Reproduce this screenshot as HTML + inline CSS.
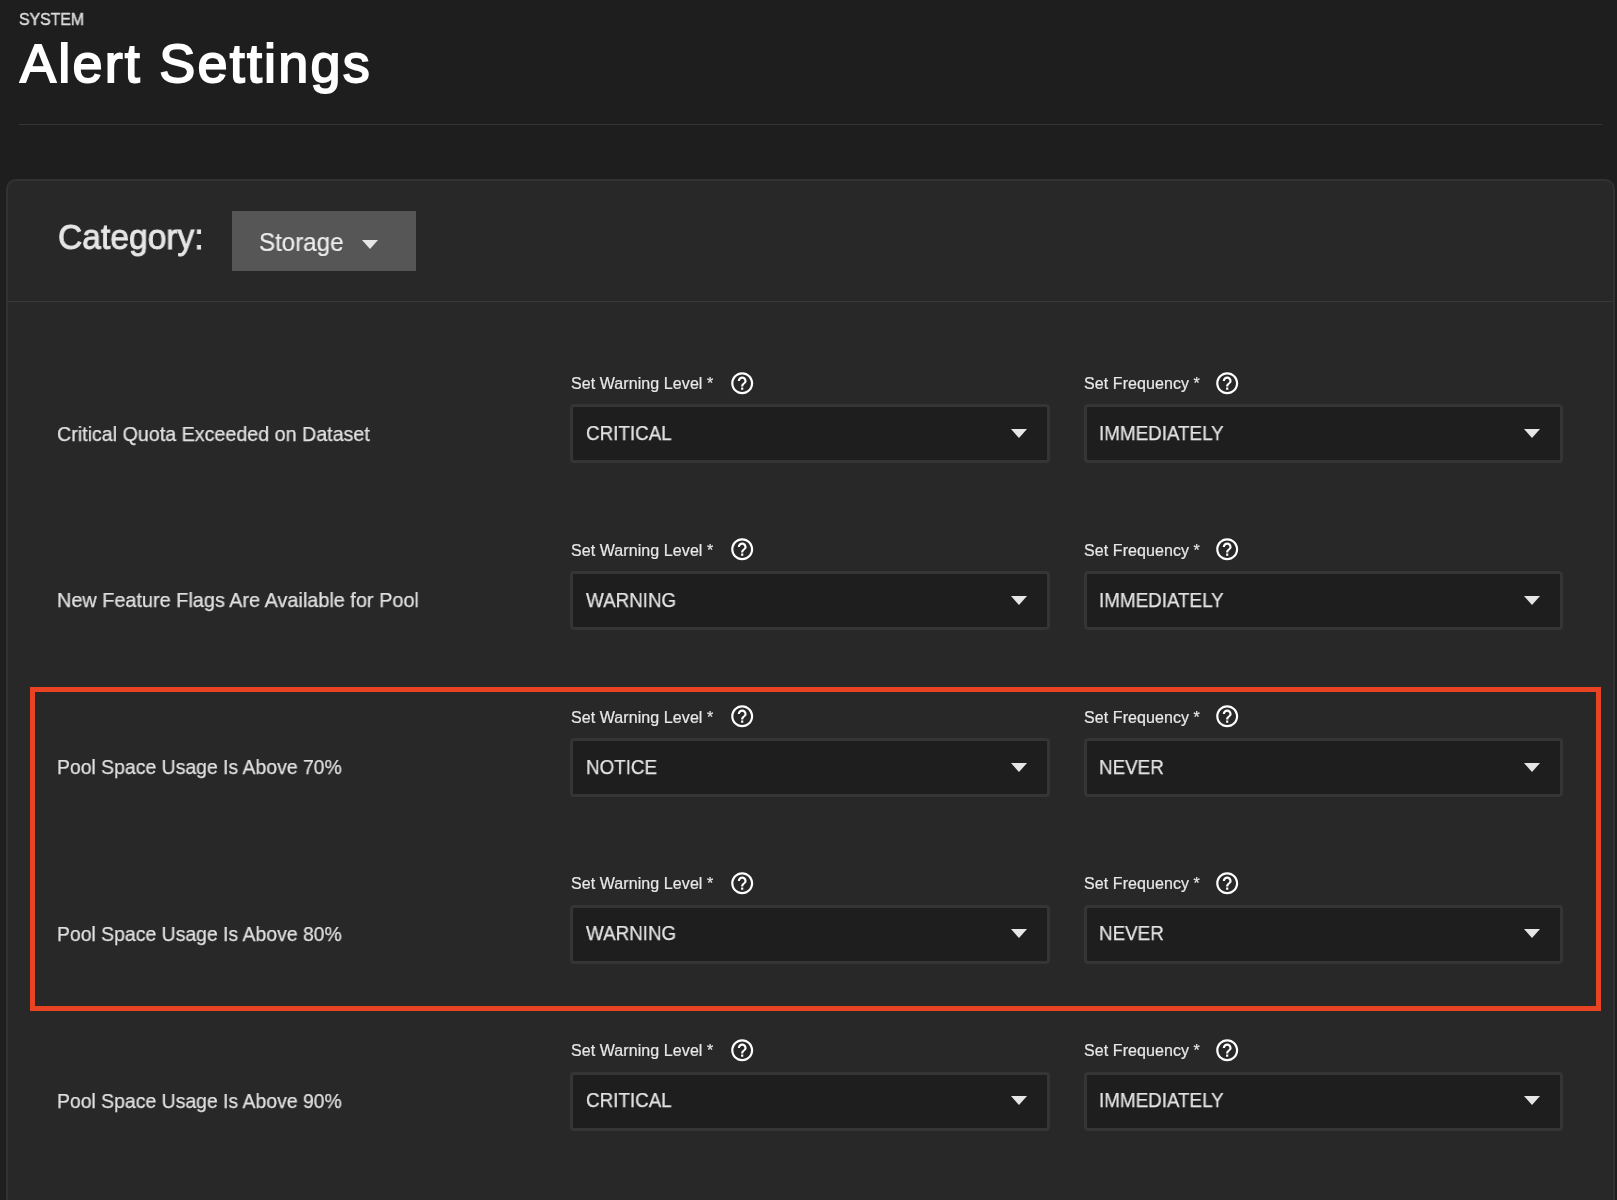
<!DOCTYPE html>
<html><head><meta charset="utf-8"><style>
html,body{margin:0;padding:0;}
body{width:1617px;height:1200px;overflow:hidden;background:#1e1e1e;position:relative;font-family:"Liberation Sans",sans-serif;color:#e3e3e3;-webkit-font-smoothing:antialiased;}
.abs{position:absolute;}
#sys,#title,#cat,#catbtn .t,.rlab,.flab,.sel .val{will-change:transform;}
#sys{position:absolute;left:19px;top:9.5px;font-size:16.5px;font-weight:normal;-webkit-text-stroke:0.5px #dcdcdc;color:#dcdcdc;line-height:19px;transform:scaleX(0.96);transform-origin:0 0;}
#title{position:absolute;left:20px;top:33px;font-size:54px;font-weight:normal;-webkit-text-stroke:1.8px #fff;color:#fff;line-height:60px;letter-spacing:2.2px;}
#rule{position:absolute;left:19px;top:124px;width:1583px;height:1px;background:#353535;}
#card{position:absolute;left:6px;top:179px;width:1605px;height:1100px;background:#282828;border:2px solid #323232;border-radius:10px;}
#sep{position:absolute;left:8px;top:301px;width:1605px;height:1px;background:#383838;}
#cat{position:absolute;left:58px;top:217.5px;font-size:35px;font-weight:normal;-webkit-text-stroke:0.9px #e6e6e6;color:#e6e6e6;line-height:37px;transform:scaleX(0.96);transform-origin:0 0;}
#catbtn{position:absolute;left:232px;top:211px;width:184px;height:60px;background:#565656;}
#catbtn .t{position:absolute;left:27px;top:16.5px;font-size:25px;color:#ececec;line-height:28px;-webkit-text-stroke:0.2px #ececec;transform:scaleX(0.965);transform-origin:0 0;}
#catbtn .a{position:absolute;left:130px;top:29px;line-height:0;}
.rlab{position:absolute;left:57px;font-size:21px;line-height:24px;color:#e0e0e0;-webkit-text-stroke:0.25px #e0e0e0;transform:scaleX(0.937);transform-origin:0 0;white-space:nowrap;}
.flab{position:absolute;font-size:16px;line-height:19px;color:#e8e8e8;-webkit-text-stroke:0.2px #e8e8e8;letter-spacing:0.08px;}
.help{position:absolute;width:26.4px;height:26.4px;line-height:0;}
.sel{position:absolute;height:53px;border:3px solid #353535;border-radius:4px;background:#1e1e1e;}
.sel .val{position:absolute;top:14.7px;font-size:20px;line-height:22px;color:#e3e3e3;-webkit-text-stroke:0.25px #e3e3e3;transform:scaleX(0.94);transform-origin:0 0;}
.sel .arr{position:absolute;top:21.7px;line-height:0;}
#red{position:absolute;left:30px;top:687px;width:1561px;height:314px;border:5px solid #e84424;}
</style></head><body>
<div id="sys">SYSTEM</div>
<div id="title">Alert Settings</div>
<div id="rule"></div>
<div id="card"></div>
<div id="sep"></div>
<div id="cat">Category:</div>
<div id="catbtn"><span class="t">Storage</span><span class="a"><svg width="16" height="9" viewBox="0 0 16 9"><path d="M0 0H16L8 9Z" fill="#e6e6e6"/></svg></span></div>
<div class="rlab" style="top:421.50px;transform:scaleX(0.937)">Critical Quota Exceeded on Dataset</div><div class="flab" style="left:571.4px;top:373.70px">Set Warning Level *</div><div class="help" style="left:728.8px;top:369.55px"><svg width="26.4" height="26.4" viewBox="0 0 24 24"><path fill="#fff" d="M11 18h2v-2h-2v2zm1-16C6.48 2 2 6.48 2 12s4.48 10 10 10 10-4.48 10-10S17.52 2 12 2zm0 18c-4.41 0-8-3.59-8-8s3.59-8 8-8 8 3.59 8 8-3.59 8-8 8zm0-14c-2.21 0-4 1.79-4 4h2c0-1.1.9-2 2-2s2 .9 2 2c0 2-3 1.75-3 5h2c0-2.25 3-2.5 3-5 0-2.21-1.79-4-4-4z"/></svg></div><div class="sel" style="left:570px;width:474px;top:404.10px"><span class="val" style="left:13px">CRITICAL</span><span class="arr" style="left:438px"><svg width="16" height="9" viewBox="0 0 16 9"><path d="M0 0H16L8 9Z" fill="#e6e6e6"/></svg></span></div><div class="flab" style="left:1084.4px;top:373.70px">Set Frequency *</div><div class="help" style="left:1214.3px;top:369.55px"><svg width="26.4" height="26.4" viewBox="0 0 24 24"><path fill="#fff" d="M11 18h2v-2h-2v2zm1-16C6.48 2 2 6.48 2 12s4.48 10 10 10 10-4.48 10-10S17.52 2 12 2zm0 18c-4.41 0-8-3.59-8-8s3.59-8 8-8 8 3.59 8 8-3.59 8-8 8zm0-14c-2.21 0-4 1.79-4 4h2c0-1.1.9-2 2-2s2 .9 2 2c0 2-3 1.75-3 5h2c0-2.25 3-2.5 3-5 0-2.21-1.79-4-4-4z"/></svg></div><div class="sel" style="left:1084px;width:473px;top:404.10px"><span class="val" style="left:12px">IMMEDIATELY</span><span class="arr" style="left:436.8px"><svg width="16" height="9" viewBox="0 0 16 9"><path d="M0 0H16L8 9Z" fill="#e6e6e6"/></svg></span></div><div class="rlab" style="top:588.40px;transform:scaleX(0.946)">New Feature Flags Are Available for Pool</div><div class="flab" style="left:571.4px;top:540.60px">Set Warning Level *</div><div class="help" style="left:728.8px;top:536.45px"><svg width="26.4" height="26.4" viewBox="0 0 24 24"><path fill="#fff" d="M11 18h2v-2h-2v2zm1-16C6.48 2 2 6.48 2 12s4.48 10 10 10 10-4.48 10-10S17.52 2 12 2zm0 18c-4.41 0-8-3.59-8-8s3.59-8 8-8 8 3.59 8 8-3.59 8-8 8zm0-14c-2.21 0-4 1.79-4 4h2c0-1.1.9-2 2-2s2 .9 2 2c0 2-3 1.75-3 5h2c0-2.25 3-2.5 3-5 0-2.21-1.79-4-4-4z"/></svg></div><div class="sel" style="left:570px;width:474px;top:571.00px"><span class="val" style="left:13px">WARNING</span><span class="arr" style="left:438px"><svg width="16" height="9" viewBox="0 0 16 9"><path d="M0 0H16L8 9Z" fill="#e6e6e6"/></svg></span></div><div class="flab" style="left:1084.4px;top:540.60px">Set Frequency *</div><div class="help" style="left:1214.3px;top:536.45px"><svg width="26.4" height="26.4" viewBox="0 0 24 24"><path fill="#fff" d="M11 18h2v-2h-2v2zm1-16C6.48 2 2 6.48 2 12s4.48 10 10 10 10-4.48 10-10S17.52 2 12 2zm0 18c-4.41 0-8-3.59-8-8s3.59-8 8-8 8 3.59 8 8-3.59 8-8 8zm0-14c-2.21 0-4 1.79-4 4h2c0-1.1.9-2 2-2s2 .9 2 2c0 2-3 1.75-3 5h2c0-2.25 3-2.5 3-5 0-2.21-1.79-4-4-4z"/></svg></div><div class="sel" style="left:1084px;width:473px;top:571.00px"><span class="val" style="left:12px">IMMEDIATELY</span><span class="arr" style="left:436.8px"><svg width="16" height="9" viewBox="0 0 16 9"><path d="M0 0H16L8 9Z" fill="#e6e6e6"/></svg></span></div><div class="rlab" style="top:755.30px;transform:scaleX(0.924)">Pool Space Usage Is Above 70%</div><div class="flab" style="left:571.4px;top:707.50px">Set Warning Level *</div><div class="help" style="left:728.8px;top:703.35px"><svg width="26.4" height="26.4" viewBox="0 0 24 24"><path fill="#fff" d="M11 18h2v-2h-2v2zm1-16C6.48 2 2 6.48 2 12s4.48 10 10 10 10-4.48 10-10S17.52 2 12 2zm0 18c-4.41 0-8-3.59-8-8s3.59-8 8-8 8 3.59 8 8-3.59 8-8 8zm0-14c-2.21 0-4 1.79-4 4h2c0-1.1.9-2 2-2s2 .9 2 2c0 2-3 1.75-3 5h2c0-2.25 3-2.5 3-5 0-2.21-1.79-4-4-4z"/></svg></div><div class="sel" style="left:570px;width:474px;top:737.90px"><span class="val" style="left:13px">NOTICE</span><span class="arr" style="left:438px"><svg width="16" height="9" viewBox="0 0 16 9"><path d="M0 0H16L8 9Z" fill="#e6e6e6"/></svg></span></div><div class="flab" style="left:1084.4px;top:707.50px">Set Frequency *</div><div class="help" style="left:1214.3px;top:703.35px"><svg width="26.4" height="26.4" viewBox="0 0 24 24"><path fill="#fff" d="M11 18h2v-2h-2v2zm1-16C6.48 2 2 6.48 2 12s4.48 10 10 10 10-4.48 10-10S17.52 2 12 2zm0 18c-4.41 0-8-3.59-8-8s3.59-8 8-8 8 3.59 8 8-3.59 8-8 8zm0-14c-2.21 0-4 1.79-4 4h2c0-1.1.9-2 2-2s2 .9 2 2c0 2-3 1.75-3 5h2c0-2.25 3-2.5 3-5 0-2.21-1.79-4-4-4z"/></svg></div><div class="sel" style="left:1084px;width:473px;top:737.90px"><span class="val" style="left:12px">NEVER</span><span class="arr" style="left:436.8px"><svg width="16" height="9" viewBox="0 0 16 9"><path d="M0 0H16L8 9Z" fill="#e6e6e6"/></svg></span></div><div class="rlab" style="top:922.20px;transform:scaleX(0.924)">Pool Space Usage Is Above 80%</div><div class="flab" style="left:571.4px;top:874.40px">Set Warning Level *</div><div class="help" style="left:728.8px;top:870.25px"><svg width="26.4" height="26.4" viewBox="0 0 24 24"><path fill="#fff" d="M11 18h2v-2h-2v2zm1-16C6.48 2 2 6.48 2 12s4.48 10 10 10 10-4.48 10-10S17.52 2 12 2zm0 18c-4.41 0-8-3.59-8-8s3.59-8 8-8 8 3.59 8 8-3.59 8-8 8zm0-14c-2.21 0-4 1.79-4 4h2c0-1.1.9-2 2-2s2 .9 2 2c0 2-3 1.75-3 5h2c0-2.25 3-2.5 3-5 0-2.21-1.79-4-4-4z"/></svg></div><div class="sel" style="left:570px;width:474px;top:904.80px"><span class="val" style="left:13px">WARNING</span><span class="arr" style="left:438px"><svg width="16" height="9" viewBox="0 0 16 9"><path d="M0 0H16L8 9Z" fill="#e6e6e6"/></svg></span></div><div class="flab" style="left:1084.4px;top:874.40px">Set Frequency *</div><div class="help" style="left:1214.3px;top:870.25px"><svg width="26.4" height="26.4" viewBox="0 0 24 24"><path fill="#fff" d="M11 18h2v-2h-2v2zm1-16C6.48 2 2 6.48 2 12s4.48 10 10 10 10-4.48 10-10S17.52 2 12 2zm0 18c-4.41 0-8-3.59-8-8s3.59-8 8-8 8 3.59 8 8-3.59 8-8 8zm0-14c-2.21 0-4 1.79-4 4h2c0-1.1.9-2 2-2s2 .9 2 2c0 2-3 1.75-3 5h2c0-2.25 3-2.5 3-5 0-2.21-1.79-4-4-4z"/></svg></div><div class="sel" style="left:1084px;width:473px;top:904.80px"><span class="val" style="left:12px">NEVER</span><span class="arr" style="left:436.8px"><svg width="16" height="9" viewBox="0 0 16 9"><path d="M0 0H16L8 9Z" fill="#e6e6e6"/></svg></span></div><div class="rlab" style="top:1089.10px;transform:scaleX(0.924)">Pool Space Usage Is Above 90%</div><div class="flab" style="left:571.4px;top:1041.30px">Set Warning Level *</div><div class="help" style="left:728.8px;top:1037.15px"><svg width="26.4" height="26.4" viewBox="0 0 24 24"><path fill="#fff" d="M11 18h2v-2h-2v2zm1-16C6.48 2 2 6.48 2 12s4.48 10 10 10 10-4.48 10-10S17.52 2 12 2zm0 18c-4.41 0-8-3.59-8-8s3.59-8 8-8 8 3.59 8 8-3.59 8-8 8zm0-14c-2.21 0-4 1.79-4 4h2c0-1.1.9-2 2-2s2 .9 2 2c0 2-3 1.75-3 5h2c0-2.25 3-2.5 3-5 0-2.21-1.79-4-4-4z"/></svg></div><div class="sel" style="left:570px;width:474px;top:1071.70px"><span class="val" style="left:13px">CRITICAL</span><span class="arr" style="left:438px"><svg width="16" height="9" viewBox="0 0 16 9"><path d="M0 0H16L8 9Z" fill="#e6e6e6"/></svg></span></div><div class="flab" style="left:1084.4px;top:1041.30px">Set Frequency *</div><div class="help" style="left:1214.3px;top:1037.15px"><svg width="26.4" height="26.4" viewBox="0 0 24 24"><path fill="#fff" d="M11 18h2v-2h-2v2zm1-16C6.48 2 2 6.48 2 12s4.48 10 10 10 10-4.48 10-10S17.52 2 12 2zm0 18c-4.41 0-8-3.59-8-8s3.59-8 8-8 8 3.59 8 8-3.59 8-8 8zm0-14c-2.21 0-4 1.79-4 4h2c0-1.1.9-2 2-2s2 .9 2 2c0 2-3 1.75-3 5h2c0-2.25 3-2.5 3-5 0-2.21-1.79-4-4-4z"/></svg></div><div class="sel" style="left:1084px;width:473px;top:1071.70px"><span class="val" style="left:12px">IMMEDIATELY</span><span class="arr" style="left:436.8px"><svg width="16" height="9" viewBox="0 0 16 9"><path d="M0 0H16L8 9Z" fill="#e6e6e6"/></svg></span></div>
<div id="red"></div>
</body></html>
